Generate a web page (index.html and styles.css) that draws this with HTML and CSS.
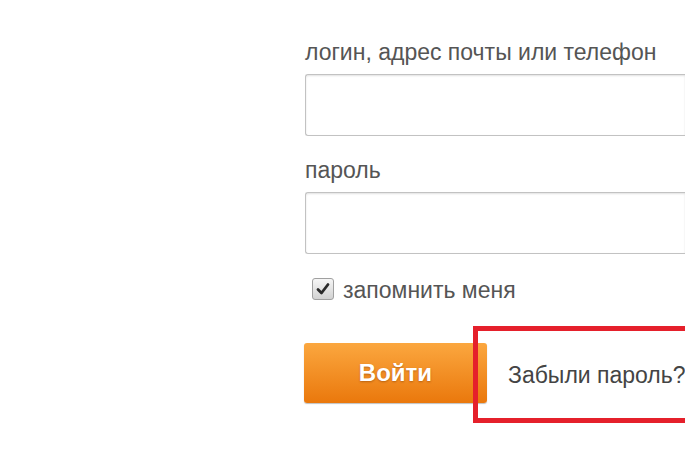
FILE: index.html
```html
<!DOCTYPE html>
<html lang="ru">
<head>
<meta charset="utf-8">
<link rel="stylesheet" href="styles.css">
</head>
<body>
<form class="login">
  <label class="field-label">логин, адрес почты или телефон</label>
  <div class="input"></div>
  <label class="field-label second">пароль</label>
  <div class="input"></div>
  <div class="remember">
    <span class="checkbox">
      <svg width="14" height="14" viewBox="0 0 14 14"><path d="M2 7.5 L5.5 11 L12 2.5" fill="none" stroke="#2a2a2a" stroke-width="2.8" stroke-linecap="round" stroke-linejoin="round"/></svg>
    </span>
    <span class="remember-text">запомнить меня</span>
  </div>
  <div class="actions">
    <button type="button" class="btn">Войти</button>
    <div class="forgot"><span>Забыли пароль?</span></div>
  </div>
</form>
</body>
</html>
```
FILE: styles.css
```css
html, body {
  margin: 0;
  padding: 0;
  background: #fff;
  overflow: hidden;
}
body {
  width: 685px;
  height: 457px;
  font-family: "Liberation Sans", Arial, sans-serif;
  color: #555;
}
.login {
  display: flex;
  flex-direction: column;
  padding: 38px 0 0 304px;
  width: 381px;
}
.field-label {
  font-size: 23px;
  line-height: 28px;
  color: #555;
  margin-left: 1px;
  white-space: nowrap;
}
.field-label.second {
  margin-top: 20px;
}
.input {
  margin-top: 8px;
  margin-left: 1px;
  height: 60px;
  border: 1px solid #c2c2c2;
  border-right: 0;
  border-radius: 3px 0 0 3px;
  box-shadow: inset 0 1px 2px rgba(0,0,0,0.12);
}
.remember {
  display: flex;
  align-items: center;
  margin-top: 24px;
  margin-left: 8px;
  height: 22px;
}
.checkbox {
  width: 20px;
  height: 20px;
  border: 1px solid #a0a0a0;
  border-radius: 3px;
  background: linear-gradient(#f6f6f6, #d2d2d2);
  display: flex;
  align-items: center;
  justify-content: center;
}
.remember-text {
  margin-left: 9px;
  padding-top: 2px;
  font-size: 23px;
  color: #555;
  white-space: nowrap;
}
.actions {
  display: flex;
  margin-top: 43px;
  position: relative;
}
.btn {
  width: 183px;
  height: 60px;
  border: none;
  border-radius: 3px;
  background: linear-gradient(#fba73f, #ea780c);
  box-shadow: 0 1px 1px rgba(0,0,0,0.25);
  color: #fff;
  font-family: "Liberation Sans", Arial, sans-serif;
  font-size: 24px;
  font-weight: bold;
  text-shadow: 0 1px 2px rgba(120,50,0,0.45);
  padding: 0;
}
.forgot {
  position: absolute;
  left: 169px;
  top: -17px;
  width: 207px;
  height: 87px;
  border: 5px solid #e5202b;
  border-right: 0;
  display: flex;
  align-items: center;
  overflow: hidden;
}
.forgot span {
  margin-left: 30px;
  padding-top: 2px;
  font-size: 23px;
  color: #444;
  white-space: nowrap;
}
```
